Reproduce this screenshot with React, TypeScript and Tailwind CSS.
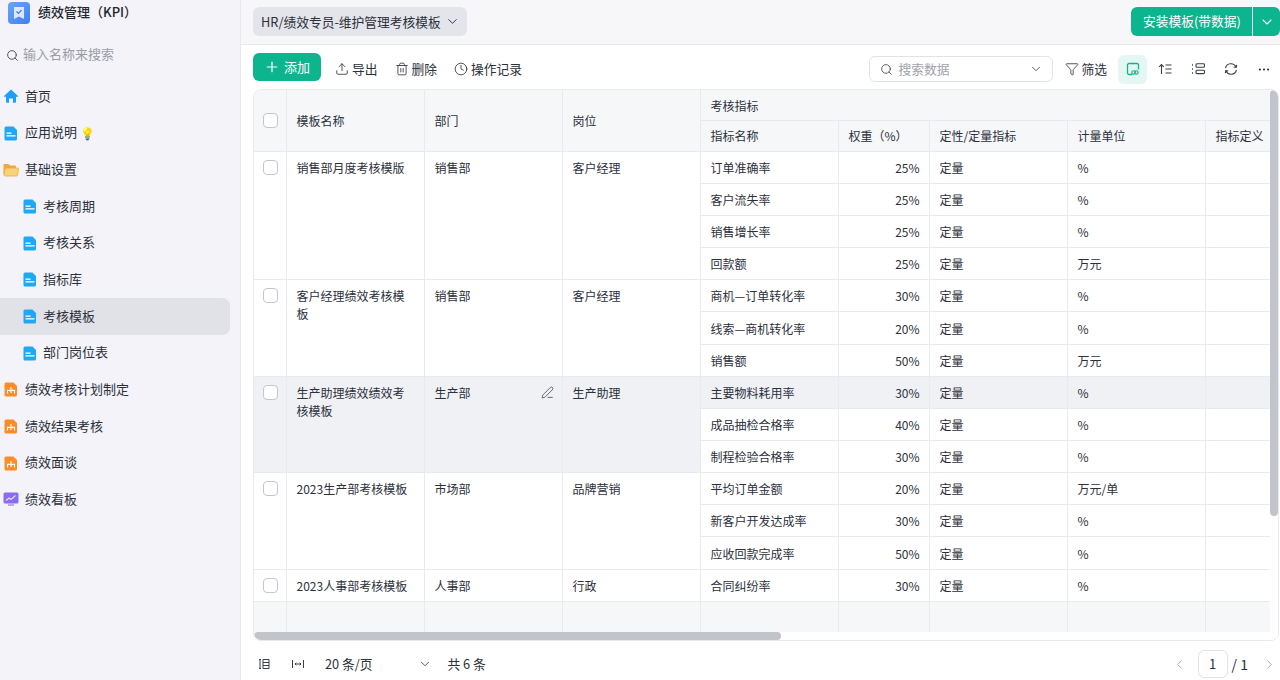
import { ChevronDown, ChevronLeft, ChevronRight, Clock, Ellipsis, Funnel, PenLine, Plus, Search, Trash2, Upload } from 'lucide-react'

function HomeIcon() {
  return (
    <svg width="16" height="16" viewBox="0 0 16 16" className="shrink-0">
      <path d="M8 1.500 15 8a.5.5 0 0 1-.4.8H13v5.200a.8.8 0 0 1-.8.8H10V10.500H6v4.300H3.800a.8.8 0 0 1-.8-.8V8.800H1.400A.5.5 0 0 1 1 8z" fill="#1e9fff" />
    </svg>
  )
}

function DocIcon() {
  return (
    <svg width="14" height="15" viewBox="0 0 14 15" className="shrink-0">
      <path d="M2 .5h7.500L13 4v9a1.500 1.500 0 0 1-1.500 1.500h-9.500A1.500 1.500 0 0 1 .5 13V2A1.500 1.500 0 0 1 2 .5z" fill="#1fa8f5" />
      <rect x="2.500" y="6.500" width="5" height="1.300" fill="#fff" />
      <rect x="2.500" y="9.200" width="9" height="1.300" fill="#fff" />
    </svg>
  )
}

function FolderIcon() {
  return (
    <svg width="16" height="14" viewBox="0 0 16 14" className="shrink-0">
      <path d="M1.500 1h4l1.500 1.500h5a1 1 0 0 1 1 1V5H3L1.500 12.500 .5 11V2a1 1 0 0 1 1-1z" fill="#eda93c" />
      <path d="M3 5h11.500a1 1 0 0 1 1 1.200l-1 6a1 1 0 0 1-1 .8H2.200a1 1 0 0 1-1-1.200l1-6A1 1 0 0 1 3 5z" fill="#fbd27a" stroke="#eda93c" strokeWidth=".8" />
    </svg>
  )
}

function ChartDocIcon() {
  return (
    <svg width="14" height="15" viewBox="0 0 14 15" className="shrink-0">
      <path d="M2 .5h7.500L13 4v9a1.500 1.500 0 0 1-1.500 1.500h-9.500A1.500 1.500 0 0 1 .5 13V2A1.500 1.500 0 0 1 2 .5z" fill="#fb8c28" />
      <path d="M7 5v6M3.500 11.500V8.300h7v3.200" stroke="#fff" strokeWidth="1.200" fill="none" />
    </svg>
  )
}

function BoardIcon() {
  return (
    <svg width="16" height="15" viewBox="0 0 16 15" className="shrink-0">
      <rect x=".5" y=".5" width="15" height="11" rx="1.500" fill="#8b6cf0" />
      <rect x="5" y="11.500" width="6" height="2.500" rx=".5" fill="#b9a6f7" />
      <path d="M3 8.500 6 6l2 1.500L12.500 3.500" stroke="#e6defd" strokeWidth="1.200" fill="none" />
    </svg>
  )
}

function AppLogo() {
  return (
    <div className="flex h-[22px] w-[22px] items-center justify-center rounded-[4px] bg-gradient-to-br from-[#6aa5fb] to-[#3f7ff2]">
      <svg width="12" height="14" viewBox="0 0 12 14">
        <path d="M1 1h10v12L6 10.500 1 13z" fill="#dbe8fe" />
        <path d="M3.500 5.500 5.500 7.300 8.500 4" stroke="#3f7ff2" strokeWidth="1.200" fill="none" />
      </svg>
    </div>
  )
}

function NavItem({ icon, label, sub, active, extra }: { icon: React.ReactNode; label: string; sub?: boolean; active?: boolean; extra?: React.ReactNode }) {
  return (
    <div className={`flex h-[36.7px] items-center rounded-r-lg text-[13px] text-[#2b303b] ${sub ? 'gap-[5px] pl-[22px]' : 'gap-[6px] pl-[3px]'} ${active ? 'bg-[#e1e2e7]' : ''}`}>
      <span className="flex w-[16px] justify-center">{icon}</span>
      <span className="pb-[2px]">{label}</span>
      {extra}
    </div>
  )
}

function Sidebar() {
  return (
    <aside className="flex h-full w-[241px] shrink-0 flex-col border-r border-[#e8e9ef] bg-[#f3f3f9] pr-[10px]">
      <div className="flex h-[25px] items-center gap-[8px] pl-[8px]">
        <AppLogo />
        <span className="pb-[2px] text-[13px] font-medium text-[#22262e]">绩效管理（KPI）</span>
      </div>
      <div className="mt-[18px] flex h-[24px] items-center gap-[4px] pl-[6px] text-[13px] text-[#9a9da6]">
        <Search size={13} strokeWidth={1.7} className="text-[#444a55]" />
        <span className="pb-[2px]">输入名称来搜索</span>
      </div>
      <div className="mt-[11px] flex flex-col">
        <NavItem icon={<HomeIcon />} label="首页" />
        <NavItem icon={<DocIcon />} label="应用说明" extra={<span className="-ml-[3px] text-[12px]">💡</span>} />
        <NavItem icon={<FolderIcon />} label="基础设置" />
        <NavItem sub icon={<DocIcon />} label="考核周期" />
        <NavItem sub icon={<DocIcon />} label="考核关系" />
        <NavItem sub icon={<DocIcon />} label="指标库" />
        <NavItem sub active icon={<DocIcon />} label="考核模板" />
        <NavItem sub icon={<DocIcon />} label="部门岗位表" />
        <NavItem icon={<ChartDocIcon />} label="绩效考核计划制定" />
        <NavItem icon={<ChartDocIcon />} label="绩效结果考核" />
        <NavItem icon={<ChartDocIcon />} label="绩效面谈" />
        <NavItem icon={<BoardIcon />} label="绩效看板" />
      </div>
    </aside>
  )
}

function TopBar() {
  return (
    <div className="flex h-[45px] shrink-0 items-start justify-between border-b border-[#e8e9ef] bg-[#f7f7fa] pl-[12px] pt-[7px]">
      <div className="flex h-[29px] items-center gap-[4px] rounded-md bg-[#e4e5ea] pl-[8px] pr-[7px] text-[12.75px] text-[#2b303b]">
        HR/绩效专员-维护管理考核模板
        <ChevronDown size={15} strokeWidth={1.5} />
      </div>
      <div className="flex h-[29px] items-center rounded-md bg-[#0db58f] text-[12.75px] text-white">
        <span className="flex h-full w-[122px] items-center justify-center border-r border-[#e9f8f4] pb-[2px] pl-[1px]">安装模板(带数据)</span>
        <span className="flex w-[27px] justify-center">
          <ChevronDown size={16} strokeWidth={1.6} />
        </span>
      </div>
    </div>
  )
}

function Toolbar() {
  return (
    <div className="flex h-[44px] shrink-0 items-center pl-[12px] pr-[9px] pt-[4px] text-[12.75px] text-[#2b303b]">
      <button className="-mt-[4px] flex h-[28px] w-[68px] items-center justify-center gap-[4px] rounded-md bg-[#0db58f] text-[13px] text-white">
        <Plus size={16} strokeWidth={1.8} />
        添加
      </button>
      <span className="ml-[14px] flex items-center gap-[3px]">
        <Upload size={14} strokeWidth={1.4} />
        导出
      </span>
      <span className="ml-[17px] flex items-center gap-[3px]">
        <Trash2 size={14} strokeWidth={1.4} />
        删除
      </span>
      <span className="ml-[17px] flex items-center gap-[3px]">
        <Clock size={14} strokeWidth={1.4} />
        操作记录
      </span>
      <div className="ml-auto flex h-[26px] w-[184px] items-center gap-[6px] rounded-md border border-[#e1e2ea] bg-white pl-[10px] pr-[9px] text-[#a0a3ab]">
        <Search size={13} strokeWidth={1.6} className="text-[#444a55]" />
        搜索数据
        <ChevronDown size={14} strokeWidth={1.5} className="ml-auto text-[#444a55]" />
      </div>
      <span className="ml-[12px] flex items-center gap-[3px]">
        <Funnel size={14} strokeWidth={1.4} />
        筛选
      </span>
      <span className="ml-[11px] flex h-[29px] w-[29px] items-center justify-center rounded-md bg-[#e5f7f3]">
        <svg width="14" height="14" viewBox="0 0 14 14" fill="none" stroke="#0db58f" strokeWidth="1.300">
          <path d="M6 12.500H3a1.500 1.500 0 0 1-1.500-1.500V3A1.500 1.500 0 0 1 3 1.500h8A1.500 1.500 0 0 1 12.500 3v4.500" />
          <circle cx="7.500" cy="10.500" r="1.700" strokeWidth="1.100" />
          <circle cx="10.500" cy="10.500" r="1.700" strokeWidth="1.100" />
        </svg>
      </span>
      <span className="ml-[11px] flex w-[14px] justify-center">
        <svg width="14" height="14" viewBox="0 0 14 14" fill="none" stroke="#3a3f4a" strokeWidth="1.100">
          <path d="M3.500 12V2.500M1.200 4.800 3.500 2.500l2.300 2.300M7.500 3h6M7.500 7h6M7.500 11h6" />
        </svg>
      </span>
      <span className="ml-[19px] flex w-[14px] justify-center">
        <svg width="14" height="14" viewBox="0 0 14 14" fill="none" stroke="#3a3f4a" strokeWidth="1.100">
          <path d="M1 3h1M1 7h1M1 11h1" strokeWidth="1.600" />
          <rect x="5" y="1.800" width="8.500" height="3.400" rx="1" />
          <rect x="5" y="8.200" width="8.500" height="3.400" rx="1" />
        </svg>
      </span>
      <span className="ml-[19px] flex w-[14px] justify-center">
        <svg width="14" height="14" viewBox="0 0 14 14" fill="none" stroke="#3a3f4a" strokeWidth="1.100">
          <path d="M1.500 6A5.600 5.600 0 0 1 12 5M12.500 8A5.600 5.600 0 0 1 2 9" />
          <path d="M12.700 2.800 12.200 5.300 9.800 5M1.300 11.200 1.800 8.700 4.200 9" />
        </svg>
      </span>
      <span className="ml-[19px] flex w-[14px] justify-center">
        <Ellipsis size={15} strokeWidth={1.8} />
      </span>
    </div>
  )
}

const metrics = [
  ['订单准确率', '25%', '%'],
  ['客户流失率', '25%', '%'],
  ['销售增长率', '25%', '%'],
  ['回款额', '25%', '万元'],
  ['商机—订单转化率', '30%', '%'],
  ['线索—商机转化率', '20%', '%'],
  ['销售额', '50%', '万元'],
  ['主要物料耗用率', '30%', '%'],
  ['成品抽检合格率', '40%', '%'],
  ['制程检验合格率', '30%', '%'],
  ['平均订单金额', '20%', '万元/单'],
  ['新客户开发达成率', '30%', '%'],
  ['应收回款完成率', '50%', '%'],
  ['合同纠纷率', '30%', '%'],
]

const groups = [
  { start: 0, span: 4, name: '销售部月度考核模版', dept: '销售部', job: '客户经理' },
  { start: 4, span: 3, name: '客户经理绩效考核模板', dept: '销售部', job: '客户经理' },
  { start: 7, span: 3, name: '生产助理绩效绩效考核模板', dept: '生产部', job: '生产助理', hover: true },
  { start: 10, span: 3, name: '2023生产部考核模板', dept: '市场部', job: '品牌营销' },
  { start: 13, span: 1, name: '2023人事部考核模板', dept: '人事部', job: '行政' },
]

const rowHeights = [32, 32, 32, 32, 32, 33, 32, 32, 32, 32, 32, 32, 33, 32]

const headCell = 'border-r border-b border-[#e9eaef] px-[9.500px] pt-[1px] font-normal'
const subHeadCell = 'border-r border-b border-[#e9eaef] px-[9.500px] font-normal'
const mergedCell = 'border-r border-b border-[#e9eaef] px-[9.500px] pt-[6.500px] align-top leading-[18px]'
const bodyCell = 'border-r border-b border-[#e9eaef] px-[9.500px] pt-[1px]'

function Checkbox() {
  return <span className="block h-[15px] w-[15px] rounded-[4px] border border-[#c4c6cf] bg-white" />
}

function DataTable() {
  return (
    <div className="relative h-[552px] overflow-hidden rounded-lg border border-[#e9eaef] text-[12px] text-[#2b303b]">
      <table className="w-[1090px] table-fixed border-separate border-spacing-0">
        <colgroup>
          <col className="w-[33px]" />
          <col className="w-[138px]" />
          <col className="w-[138px]" />
          <col className="w-[138px]" />
          <col className="w-[138px]" />
          <col className="w-[91px]" />
          <col className="w-[138px]" />
          <col className="w-[138px]" />
          <col className="w-[138px]" />
        </colgroup>
        <thead className="bg-[#f6f7f9] text-left">
          <tr className="h-[31px]">
            <th rowSpan={2} className="border-r border-b border-[#e9eaef] pl-[9px] font-normal">
              <Checkbox />
            </th>
            <th rowSpan={2} className={headCell}>模板名称</th>
            <th rowSpan={2} className={headCell}>部门</th>
            <th rowSpan={2} className={headCell}>岗位</th>
            <th colSpan={5} className="border-b border-[#e9eaef] px-[9.500px] pt-[1px] font-normal">考核指标</th>
          </tr>
          <tr className="h-[31px]">
            <th className={subHeadCell}>指标名称</th>
            <th className={subHeadCell}>权重（%）</th>
            <th className={subHeadCell}>定性/定量指标</th>
            <th className={subHeadCell}>计量单位</th>
            <th className={subHeadCell}>指标定义</th>
          </tr>
        </thead>
        <tbody>
          {groups.map((g) =>
            metrics.slice(g.start, g.start + g.span).map((m, i) => (
              <tr key={m[0]} className={g.hover && i === 0 ? 'bg-[#f0f1f5]' : ''} style={{ height: rowHeights[g.start + i] }}>
                {i === 0 && (
                  <>
                    <td rowSpan={g.span} className={`border-r border-b border-[#e9eaef] pl-[9px] pt-[8px] align-top ${g.hover ? 'bg-[#f0f1f5]' : ''}`}>
                      <Checkbox />
                    </td>
                    <td rowSpan={g.span} className={`${mergedCell} ${g.hover ? 'bg-[#f0f1f5]' : ''}`}>{g.name}</td>
                    <td rowSpan={g.span} className={`${mergedCell} ${g.hover ? 'bg-[#f0f1f5]' : ''}`}>
                      <div className="flex items-center justify-between">
                        {g.dept}
                        {g.hover && <PenLine size={13} strokeWidth={1.3} className="-mr-[1px]" />}
                      </div>
                    </td>
                    <td rowSpan={g.span} className={`${mergedCell} ${g.hover ? 'bg-[#f0f1f5]' : ''}`}>{g.job}</td>
                  </>
                )}
                <td className={bodyCell}>{m[0]}</td>
                <td className={`${bodyCell} text-right`}>{m[1]}</td>
                <td className={bodyCell}>定量</td>
                <td className={bodyCell}>{m[2]}</td>
                <td className="border-r border-b border-[#e9eaef]" />
              </tr>
            ))
          )}
          <tr className="h-[30px] bg-[#f6f7f9]">
            {Array.from({ length: 9 }).map((_, i) => (
              <td key={i} className="border-r border-[#e9eaef]" />
            ))}
          </tr>
        </tbody>
      </table>
      {/* scrollbar tracks and thumbs lie over the table */}
      <div className="absolute bottom-0 right-0 top-0 w-[8px] bg-white" />
      <div className="absolute bottom-0 left-0 right-0 h-[8px] bg-white" />
      <div className="absolute right-0 top-0 h-[426px] w-[8px] rounded bg-[#c2c4cb]" />
      <div className="absolute bottom-0 left-0 h-[8px] w-[527px] rounded bg-[#c2c4cb]" />
    </div>
  )
}

function Pager() {
  return (
    <div className="flex h-[46px] items-center text-[12.75px] text-[#2b303b]">
      <svg width="12" height="12" viewBox="0 0 12 12" fill="none" stroke="#3a3f4a" strokeWidth="1" className="ml-[5px]">
        <path d="M5 1.500h6v9H5zM5 4.500h6M5 7.500h6M1 1.500h2M2 1.500v9M1 10.500h2" />
      </svg>
      <svg width="12" height="10" viewBox="0 0 12 10" fill="none" stroke="#3a3f4a" strokeWidth="1" className="ml-[22px]">
        <path d="M.5 1v8M11.500 1v8M3 5h6M3 5l1.300-1.300M3 5l1.300 1.300M9 5 7.700 3.700M9 5 7.700 6.300" />
      </svg>
      <span className="ml-[21px]">20 条/页</span>
      <ChevronDown size={14} strokeWidth={1.4} className="ml-[45px]" />
      <span className="ml-[16px]">共 6 条</span>
      <div className="ml-auto mr-[2px] flex items-center">
        <ChevronLeft size={15} strokeWidth={1.4} className="text-[#9ea1aa]" />
        <span className="ml-[11px] flex h-[28px] w-[30px] items-center justify-center rounded-md border border-[#e1e2ea] text-[13px]">1</span>
        <span className="ml-[4px] text-[14px]">/ 1</span>
        <ChevronRight size={15} strokeWidth={1.4} className="ml-[14px] text-[#9ea1aa]" />
      </div>
    </div>
  )
}

export default function App() {
  return (
    <div className="flex h-[680px] w-[1280px] overflow-hidden bg-white font-['Noto_Sans_CJK_SC','Inter',sans-serif]">
      <Sidebar />
      <main className="flex min-w-0 flex-1 flex-col">
        <TopBar />
        <Toolbar />
        <div className="pl-[12px] pr-[1px]">
          <DataTable />
          <Pager />
        </div>
      </main>
    </div>
  )
}
